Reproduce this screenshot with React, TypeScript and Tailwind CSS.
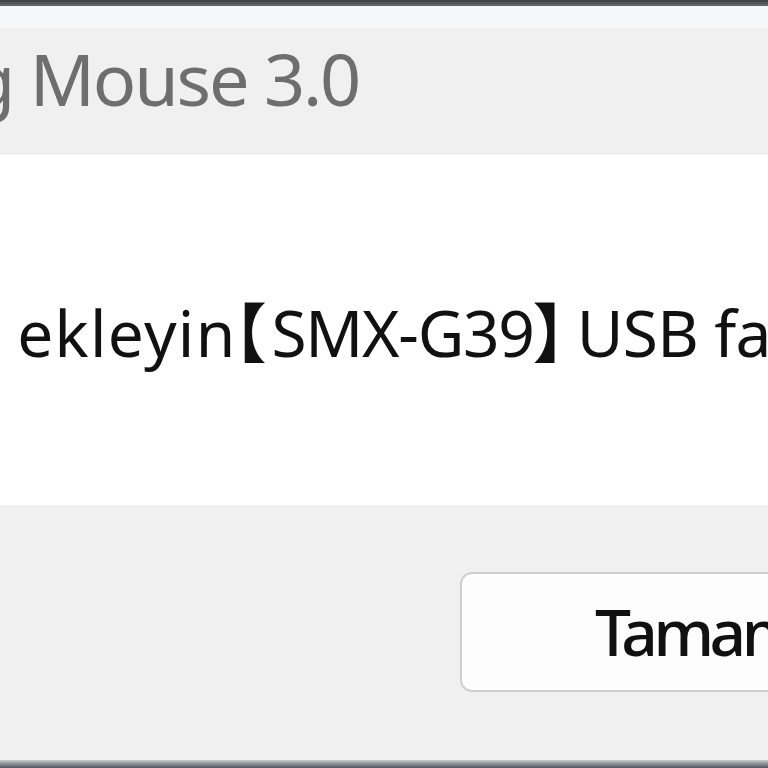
import React from "react";

function App(): React.JSX.Element {
    return (
        <div className="w-[768px] h-[768px] overflow-hidden flex flex-col bg-[#f0f0f0] font-['Noto_Sans','Noto_Sans_CJK_SC',sans-serif]">
            <div className="h-[6px] bg-gradient-to-b from-[#3a3f44] to-[#6a6e72]"></div>
            <div className="h-[149px] flex flex-col bg-[#f0f0f0]">
                <div className="h-[22px] bg-[#f6f7f8]"></div>
                <div className="flex items-center h-[100px] whitespace-nowrap">
                    <span className="-ml-[29px] text-[72px] leading-none tracking-[-0.03em] text-[#6e6e6e]">g Mouse 3.0</span>
                </div>
            </div>
            <div className="h-[350px] bg-white flex items-center pt-[6px] whitespace-nowrap">
                <span className="-ml-[36px] text-[64px] leading-none text-[#111]">
                    <span className="-mr-[3px]">n </span>
                    <span className="tracking-[0.02em]">ekleyin</span>
                    <span className="-ml-[34px] mr-[5px] font-bold">【</span>
                    <span className="tracking-[-0.02em]">SMX-G39</span>
                    <span className="-ml-[1px] -mr-[20px] font-bold">】</span>
                    <span className="tracking-[-0.01em]">USB fare</span>
                </span>
            </div>
            <div className="flex-1 bg-[#f0f0f0] flex flex-col">
                <div className="flex justify-end pt-[67px]">
                    <button className="w-[320px] -mr-[12px] h-[120px] rounded-[12px] border-2 border-[#cfcfcf] bg-[#fdfdfd] flex items-center pl-[133px] whitespace-nowrap">
                        <span className="text-[64px] leading-none font-medium tracking-[-0.07em] text-[#111]">Tamam</span>
                    </button>
                </div>
            </div>
            <div className="h-[8px] bg-gradient-to-b from-[#c8ccd0] to-[#50565c]"></div>
        </div>
    );
}

export default App;
